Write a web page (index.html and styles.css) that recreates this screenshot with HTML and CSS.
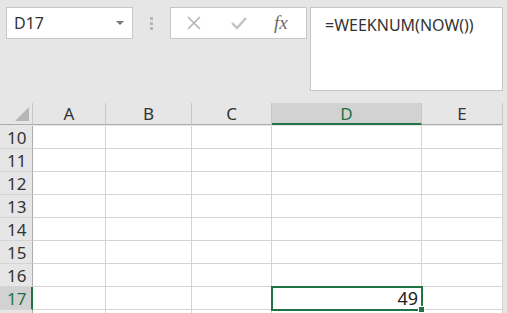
FILE: index.html
```html
<!DOCTYPE html>
<html lang="zh-cn">
<head>
    <meta charset="UTF-8">
    <meta name="viewport" content="width=device-width, initial-scale=1.0">
    <title>WEEKNUM</title>
    <link rel="stylesheet" href="styles.css">
</head>
<body>
    <div class="toolbar">
        <div class="namebox">
            <span>D17</span>
            <span class="caret"></span>
        </div>
        <div class="dots"><i></i><i></i><i></i></div>
        <div class="btnbox">
            <svg class="ico" width="16" height="16" viewBox="0 0 16 16"><path d="M2 2 L14 14 M14 2 L2 14" stroke="#b4b4b4" stroke-width="1.6" fill="none"/></svg>
            <svg class="ico" width="18" height="16" viewBox="0 0 18 16"><path d="M2 8 L7 13 L16 3" stroke="#c2c2c2" stroke-width="2.4" fill="none"/></svg>
            <span class="fx">fx</span>
        </div>
        <div class="formula">=WEEKNUM(NOW())</div>
    </div>

    <div class="sheet">
        <div class="corner"><span class="tri"></span></div>
        <div class="colhead">A</div>
        <div class="colhead">B</div>
        <div class="colhead">C</div>
        <div class="colhead active">D</div>
        <div class="colhead">E</div>
    </div>

    <div class="sheet" id="rows"></div>

    <script>
        // Filas 10 a 17, a célula D17 tem o valor; a 18 só aparece a borda
        const rows = document.getElementById("rows");
        for (let r = 10; r <= 18; r++) {
            let html = `<div class="rowhead${r === 17 ? " active" : ""}">${r < 18 ? r : ""}</div>`;
            for (let c = 0; c < 5; c++) {
                if (r === 17 && c === 3) {
                    html += `<div class="cell num">49<span class="sel"></span><span class="handle"></span></div>`;
                } else {
                    html += `<div class="cell"></div>`;
                }
            }
            rows.innerHTML += html;
        }
    </script>
</body>
</html>
```
FILE: styles.css
```css
body {
    margin: 0;
    background-color: #e6e6e6;
    font-family: "Noto Sans", "Noto Sans CJK SC", sans-serif;
    color: #333;
    overflow: hidden;
}
.toolbar {
    display: flex;
    align-items: flex-start;
    height: 103px;
    padding-top: 7px;
    box-sizing: border-box;
}
.namebox {
    margin-left: 6px;
    width: 127px;
    height: 32px;
    box-sizing: border-box;
    background-color: #fff;
    border: 1px solid #c6c6c6;
    display: flex;
    align-items: center;
    justify-content: space-between;
    padding: 0 8px 0 7px;
    font-size: 16px;
    color: #333;
}
.caret {
    width: 0;
    height: 0;
    border-left: 4px solid transparent;
    border-right: 4px solid transparent;
    border-top: 4px solid #777;
}
.dots {
    width: 37px;
    height: 32px;
    display: flex;
    flex-direction: column;
    align-items: center;
    justify-content: center;
    gap: 2px;
}
.dots i {
    display: block;
    width: 3px;
    height: 3px;
    background-color: #b8b8b8;
}
.btnbox {
    width: 137px;
    height: 32px;
    box-sizing: border-box;
    background-color: #fff;
    border: 1px solid #c6c6c6;
    display: flex;
    align-items: center;
    padding-left: 15px;
    gap: 28px;
}
.fx {
    font-family: "Liberation Serif", serif;
    font-style: italic;
    font-size: 19px;
    color: #6a6a6a;
    margin-left: -2px;
}
.formula {
    margin-left: 3px;
    width: 193px;
    height: 84px;
    box-sizing: border-box;
    background-color: #fff;
    border: 1px solid #c6c6c6;
    padding: 6px 0 0 14px;
    font-size: 16px;
    color: #333;
}
.sheet {
    display: grid;
    grid-template-columns: 33px 73px 86px 80px 150px 81px;
    grid-auto-rows: 23px;
}
.sheet:first-of-type {
    grid-auto-rows: 22px;
}
.corner, .colhead {
    height: 22px;
    box-sizing: border-box;
    border-right: 1px solid #c8c8c8;
    border-bottom: 1px solid #ababab;
    background-color: #e6e6e6;
}
.corner {
    position: relative;
}
.tri {
    position: absolute;
    right: 3px;
    bottom: 3px;
    width: 0;
    height: 0;
    border-left: 14px solid transparent;
    border-bottom: 14px solid #b6b6b6;
}
.colhead {
    text-align: center;
    font-size: 17px;
    line-height: 22px;
    color: #333;
}
.colhead.active {
    background-color: #d2d2d2;
    color: #217346;
    border-bottom: 2px solid #217346;
    line-height: 21px;
}
.rowhead {
    box-sizing: border-box;
    border-right: 1px solid #ababab;
    border-bottom: 1px solid #d4d4d4;
    background-color: #e6e6e6;
    font-size: 17px;
    line-height: 23px;
    padding-left: 7px;
    color: #333;
}
.rowhead.active {
    background-color: #d2d2d2;
    color: #217346;
    border-right: 2px solid #217346;
}
.cell {
    box-sizing: border-box;
    background-color: #fff;
    border-right: 1px solid #d4d4d4;
    border-bottom: 1px solid #d4d4d4;
}
.num {
    position: relative;
    text-align: right;
    font-size: 18px;
    line-height: 23px;
    padding-right: 3px;
    color: #222;
}
.sel {
    position: absolute;
    left: -1px;
    top: -1px;
    right: -2px;
    bottom: -2px;
    border: 2px solid #217346;
}
.handle {
    position: absolute;
    right: -4px;
    bottom: -4px;
    width: 5px;
    height: 5px;
    background-color: #217346;
    border: 1px solid #fff;
}
```
